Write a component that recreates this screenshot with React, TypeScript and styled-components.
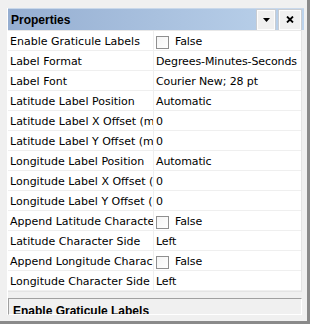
import React from 'react';
import styled, { createGlobalStyle } from 'styled-components';

// Property rows shown in the grid
interface PropertyRow {
  name: string;
  value: string;
  check?: boolean;
}

const rows: PropertyRow[] = [
  { name: 'Enable Graticule Labels', value: 'False', check: true },
  { name: 'Label Format', value: 'Degrees-Minutes-Seconds' },
  { name: 'Label Font', value: 'Courier New; 28 pt' },
  { name: 'Latitude Label Position', value: 'Automatic' },
  { name: 'Latitude Label X Offset (m)', value: '0' },
  { name: 'Latitude Label Y Offset (m)', value: '0' },
  { name: 'Longitude Label Position', value: 'Automatic' },
  { name: 'Longitude Label X Offset (m)', value: '0' },
  { name: 'Longitude Label Y Offset (m)', value: '0' },
  { name: 'Append Latitude Character', value: 'False', check: true },
  { name: 'Latitude Character Side', value: 'Left' },
  { name: 'Append Longitude Character', value: 'False', check: true },
  { name: 'Longitude Character Side', value: 'Left' },
];

const GlobalStyle = createGlobalStyle`
  html, body {
    margin: 0;
    padding: 0;
    background: #f0f0f0;
  }
  body {
    font-family: "DejaVu Sans", Verdana, sans-serif;
    font-size: 11px;
    color: #000;
  }
`;

const Window = styled.div`
  box-sizing: border-box;
  width: 310px;
  height: 324px;
  padding: 8px 3px 6px 7px;
  background: #f0f0f0;
  border-right: 3px solid #8a8a8a;
  border-bottom: 3px solid #8a8a8a;
  display: flex;
  flex-direction: column;
  overflow: hidden;
`;

const Body = styled.div`
  flex: 1;
  display: flex;
  flex-direction: column;
  border-left: 1px solid #ffffff;
  min-height: 0;
`;

const TitleBar = styled.div`
  height: 22px;
  display: flex;
  align-items: center;
  padding-left: 3px;
  padding-right: 3px;
  background: linear-gradient(to right, #95aed1, #bcd3ec);
  border-top: 1px solid #c9d8ea;
  box-sizing: border-box;
`;

const Title = styled.div`
  flex: 1;
  font-family: "Liberation Sans", Arial, sans-serif;
  font-weight: bold;
  font-size: 12px;
  padding-top: 1px;
`;

const TitleButton = styled.div<{ $w: number }>`
  box-sizing: border-box;
  width: ${(p) => p.$w}px;
  height: 20px;
  margin-left: 4px;
  background: #f0f0f0;
  border: 1px solid #fdfdfd;
  outline: 1px solid #c8ccd2;
  display: flex;
  align-items: center;
  justify-content: center;
`;

const Grid = styled.div`
  width: 293px;
  background: #ffffff;
  border-top: 1px solid #e8e8e8;
  border-right: 1px solid #e4e4e4;
  border-bottom: 1px solid #e4e4e4;
`;

const Row = styled.div`
  display: flex;
  height: 20px;
  box-sizing: border-box;
  border-bottom: 1px solid #efefef;
`;

const NameCell = styled.div`
  width: 146px;
  box-sizing: border-box;
  padding: 3px 0 0 2px;
  line-height: 16px;
  white-space: nowrap;
  overflow: hidden;
  border-right: 1px solid #efefef;
`;

const ValueCell = styled.div`
  flex: 1;
  display: flex;
  align-items: flex-start;
  padding: 3px 0 0 2px;
  line-height: 16px;
  letter-spacing: -0.1px;
  white-space: nowrap;
  overflow: hidden;
`;

const CheckBox = styled.span`
  box-sizing: border-box;
  width: 13px;
  height: 13px;
  margin: 2px 6px 0 0;
  border: 1px solid #8f8f8f;
  background: linear-gradient(135deg, #f4f4f4, #ffffff);
  flex-shrink: 0;
`;

const DescBox = styled.div`
  margin-top: 6px;
  flex: 1;
  box-sizing: border-box;
  width: 294px;
  border-top: 1px solid #a0a0a0;
  border-left: 1px solid #a0a0a0;
  border-right: 1px solid #ffffff;
  border-bottom: 1px solid #ffffff;
  padding: 4px 0 0 4px;
  overflow: hidden;
`;

const DescTitle = styled.div`
  font-family: "Liberation Sans", Arial, sans-serif;
  font-weight: bold;
  font-size: 12px;
  line-height: 17px;
  white-space: nowrap;
`;

const App: React.FC = () => {
  return (
    <>
      <GlobalStyle />
      <Window>
        <Body>
          <TitleBar>
            <Title>Properties</Title>
            <TitleButton $w={18}>
              <svg width="7" height="4" viewBox="0 0 7 4">
                <polygon points="0,0 7,0 3.5,4" fill="#000" />
              </svg>
            </TitleButton>
            <TitleButton $w={22}>
              <svg width="8" height="7" viewBox="0 0 8 7">
                <path d="M1 0.5 L7 6.5 M7 0.5 L1 6.5" stroke="#000" strokeWidth="1.8" />
              </svg>
            </TitleButton>
          </TitleBar>
          <Grid>
            {rows.map((r) => (
              <Row key={r.name}>
                <NameCell>{r.name}</NameCell>
                <ValueCell>
                  {r.check && <CheckBox />}
                  {r.value}
                </ValueCell>
              </Row>
            ))}
          </Grid>
          <DescBox>
            <DescTitle>Enable Graticule Labels</DescTitle>
          </DescBox>
        </Body>
      </Window>
    </>
  );
};

export default App;
